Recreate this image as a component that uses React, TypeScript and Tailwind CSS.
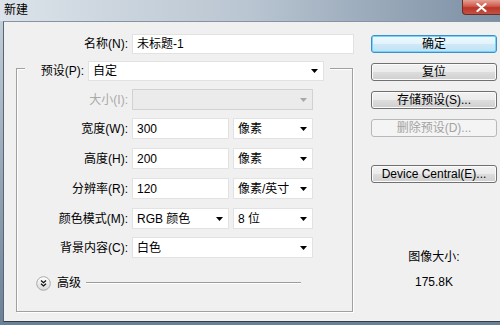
import React from "react";

function Arrow({ gray }: { gray?: boolean }) {
  return (
    <svg width="7" height="4" viewBox="0 0 7 4" className="shrink-0">
      <path d="M0 0h7L3.5 4z" fill={gray ? "#a8a8a8" : "#000"} />
    </svg>
  );
}

function Select({ value, w, disabled }: { value: string; w: string; disabled?: boolean }) {
  return (
    <div
      className={
        "ml-[4px] h-[21px] flex items-center justify-between pl-[4px] pr-[5px] border " +
        w +
        (disabled ? " bg-[#ebebeb] border-[#d2d2d2]" : " bg-white border-[#e2e2e2]")
      }
    >
      <span className="leading-none">{value}</span>
      <Arrow gray={disabled} />
    </div>
  );
}

function Input({ value, w }: { value: string; w: string }) {
  return (
    <div className={"ml-[4px] h-[21px] flex items-center pl-[4px] bg-white border border-[#e2e2e2] " + w}>
      <span className="leading-none">{value}</span>
    </div>
  );
}

function Label({ text, gray }: { text: string; gray?: boolean }) {
  return (
    <div className={"w-[111px] text-right leading-none " + (gray ? "text-[#a9a9a9]" : "")}>{text}</div>
  );
}

function Btn({ text, mt, primary, disabled }: { text: string; mt: string; primary?: boolean; disabled?: boolean }) {
  let cls =
    "h-[18px] w-[126px] rounded-[3px] border flex items-center justify-center leading-none " + mt + " ";
  if (primary)
    cls +=
      "border-[#3c8fc9] bg-[linear-gradient(#f0f9fe,#e2f3fc_50%,#cfe9f8_51%,#bfe1f5)] shadow-[inset_0_0_0_1px_#70d6fb]";
  else if (disabled) cls += "border-[#b5b9bc] bg-[#f4f4f4] text-[#a3a3a3]";
  else
    cls +=
      "border-[#707070] bg-[linear-gradient(#f2f2f2,#ebebeb_50%,#dddddd_51%,#cfcfcf)] shadow-[inset_0_0_0_1px_#fbfbfb]";
  return <div className={cls}>{text}</div>;
}

export default function App() {
  return (
    <div className="w-[500px] h-[325px] overflow-hidden flex flex-col bg-[linear-gradient(#c9d2db,#6c8095)] text-[12px] text-black font-['Liberation_Sans','Noto_Sans_CJK_SC',sans-serif]">
      {/* title bar */}
      <div className="relative h-[21px] shrink-0 bg-gradient-to-r from-[#dce3ea] via-[#b9c5d1] to-[#7c8fa4]">
        <span className="absolute left-[4px] top-[3px] text-[12px] leading-[15px]">新建</span>
        <div className="absolute right-0 top-0 w-[38px] h-[15px] rounded-bl-[4px] border-l border-b border-[#6f2b24] bg-[linear-gradient(#e4a196,#cf5a4a_45%,#b9352a_55%,#c25342)] flex items-center justify-center">
          <svg width="11" height="9" viewBox="0 0 11 9">
            <path d="M1.5 1l8 7M9.5 1l-8 7" stroke="#fff" strokeWidth="2.2" strokeLinecap="round" />
          </svg>
        </div>
      </div>

      {/* client */}
      <div className="flex-1 ml-[3px] mb-[3px] flex bg-[#f0f0f0] border-l border-t border-b border-l-[#55667a] border-t-[#8593a2] border-b-[#323d4a]">
        {/* left column */}
        <div className="w-[356px] shrink-0 flex flex-col">
          <div className="mt-[12px] h-[20px] flex items-center">
            <div className="w-[124px] text-right leading-none">名称(N):</div>
            <div className="ml-[4px] h-[20px] w-[222px] flex items-center pl-[4px] bg-white border border-[#e2e2e2]">
              <span className="leading-none">未标题-1</span>
            </div>
          </div>

          <div className="mt-[14px] ml-[12px] w-[337px] h-[244px] border border-[#a0a0a0] shadow-[inset_1px_1px_0_#fff,1px_1px_0_#fff] flex flex-col">
            <div className="-mt-[8px] ml-[8px] w-[305px] h-[20px] bg-[#f0f0f0] flex items-center">
              <div className="w-[59px] text-right leading-none">预设(P):</div>
              <div className="ml-[4px] h-[20px] w-[236px] flex items-center justify-between pl-[4px] pr-[5px] bg-white border border-[#e2e2e2]">
                <span className="leading-none">自定</span>
                <Arrow />
              </div>
            </div>

            <div className="mt-[8px] h-[21px] flex items-center">
              <Label text="大小(I):" gray />
              <Select value="" w="w-[181px]" disabled />
            </div>

            <div className="mt-[8px] h-[21px] flex items-center">
              <Label text="宽度(W):" />
              <Input value="300" w="w-[97px]" />
              <Select value="像素" w="w-[80px]" />
            </div>

            <div className="mt-[9px] h-[21px] flex items-center">
              <Label text="高度(H):" />
              <Input value="200" w="w-[97px]" />
              <Select value="像素" w="w-[80px]" />
            </div>

            <div className="mt-[9px] h-[21px] flex items-center">
              <Label text="分辨率(R):" />
              <Input value="120" w="w-[97px]" />
              <Select value="像素/英寸" w="w-[80px]" />
            </div>

            <div className="mt-[9px] h-[21px] flex items-center">
              <Label text="颜色模式(M):" />
              <Select value="RGB 颜色" w="w-[97px]" />
              <Select value="8 位" w="w-[80px]" />
            </div>

            <div className="mt-[8px] h-[21px] flex items-center">
              <Label text="背景内容(C):" />
              <Select value="白色" w="w-[181px]" />
            </div>

            <div className="mt-[17px] h-[16px] ml-[19px] flex items-center">
              <svg width="15" height="15" viewBox="0 0 15 15" className="shrink-0">
                <defs>
                  <linearGradient id="adv" x1="0" y1="0" x2="0" y2="1">
                    <stop offset="0" stopColor="#ffffff" />
                    <stop offset="1" stopColor="#d8d8d8" />
                  </linearGradient>
                </defs>
                <circle cx="7.5" cy="7.5" r="6.8" fill="url(#adv)" stroke="#a9a9a9" strokeWidth="1" />
                <path d="M5 4.5l2.5 2.2L10 4.5M5 7.8l2.5 2.2L10 7.8" fill="none" stroke="#111" strokeWidth="1.3" />
              </svg>
              <span className="ml-[6px] leading-none">高级</span>
              <div className="ml-[5px] w-[215px] h-[2px] border-t border-[#9c9c9c] border-b border-b-[#ffffff]" />
            </div>
          </div>
        </div>

        {/* right column */}
        <div className="ml-[11px] flex flex-col">
          <Btn text="确定" mt="mt-[13px]" primary />
          <Btn text="复位" mt="mt-[10px]" />
          <Btn text="存储预设(S)..." mt="mt-[10px]" />
          <Btn text="删除预设(D)..." mt="mt-[10px]" disabled />
          <Btn text="Device Central(E)..." mt="mt-[28px]" />
          <div className="mt-[66px] w-[126px] h-[16px] flex items-center justify-center leading-none">图像大小:</div>
          <div className="mt-[9px] w-[126px] h-[16px] flex items-center justify-center leading-none">175.8K</div>
        </div>
      </div>
    </div>
  );
}
